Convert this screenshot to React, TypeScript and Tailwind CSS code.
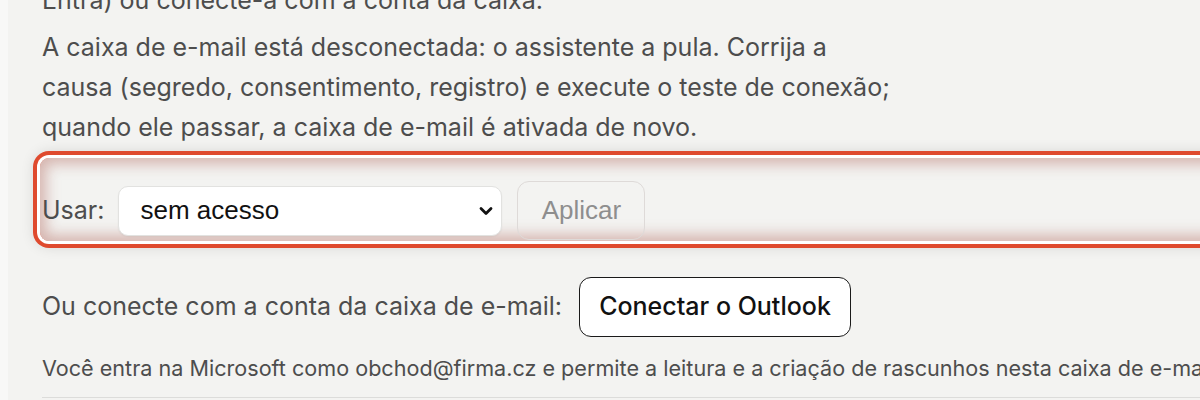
import React from "react";

export default function App() {
  return (
    <div className="w-[1200px] h-[400px] overflow-hidden flex bg-[#f3f3f1]" style={{ fontFamily: "Inter, 'Noto Sans', sans-serif" }}>
      <div className="w-[8px] shrink-0 bg-[#f8f8f7]" />
      <div className="flex-1 min-w-0 pl-[34px] mt-[-20px] text-[#4d4d4d]">
        <p className="text-[25px] leading-[40px] whitespace-nowrap">Entra) ou conecte-a com a conta da caixa.</p>
        <p className="mt-[7px] text-[25px] leading-[40px] whitespace-nowrap">
          A caixa de e-mail está desconectada: o assistente a pula. Corrija a<br />
          causa (segredo, consentimento, registro) e execute o teste de conexão;<br />
          quando ele passar, a caixa de e-mail é ativada de novo.
        </p>
        <div className="mt-[11px] ml-[-2px] mr-[-40px] rounded-[9px] pt-[23px] pb-[1px] pl-[2px] flex items-center shadow-[0_0_0_3px_#ffffff,0_0_0_7px_#df4a2e,0_0_14px_6px_rgba(0,0,0,0.12),inset_0_0_14px_6px_rgba(190,130,120,0.55)]">
          <span className="text-[25px] text-[#4d4d4d]">Usar:</span>
          <div className="ml-[14px] w-[384px] h-[50px] rounded-[10px] bg-white border border-[#e2e2e0] flex items-center justify-between pl-[21px] pr-[8px] shadow-[0_1px_2px_rgba(0,0,0,0.05)]">
            <span className="text-[26px] text-[#111]" style={{ fontFamily: "'Liberation Sans', Arial, sans-serif" }}>sem acesso</span>
            <svg width="14" height="10" viewBox="0 0 14 10" fill="none">
              <path d="M2 2.5 L7 7.5 L12 2.5" stroke="#111" strokeWidth="2.8" strokeLinecap="round" strokeLinejoin="round" />
            </svg>
          </div>
          <div className="ml-[15px] w-[128px] h-[59px] rounded-[12px] border border-[#dedad8] flex items-center justify-center text-[26px] text-[#8e8e8e]" style={{ fontFamily: "'Liberation Sans', Arial, sans-serif" }}>
            Aplicar
          </div>
        </div>
        <div className="mt-[36px] flex items-center">
          <span className="text-[25px] text-[#4d4d4d]">Ou conecte com a conta da caixa de e-mail:</span>
          <div className="ml-[17px] w-[272px] h-[60px] rounded-[12px] border-[1.5px] border-[#1a1a1a] bg-white flex items-center justify-center text-[25px] font-medium text-[#111]">
            Conectar o Outlook
          </div>
        </div>
        <p className="mt-[13px] text-[21.6px] leading-[36px] whitespace-nowrap text-[#4d4d4d]">
          Você entra na Microsoft como obchod@firma.cz e permite a leitura e a criação de rascunhos nesta caixa de e-mail.
        </p>
        <div className="mt-[11px] h-px bg-[#dcdcda]" />
      </div>
    </div>
  );
}
